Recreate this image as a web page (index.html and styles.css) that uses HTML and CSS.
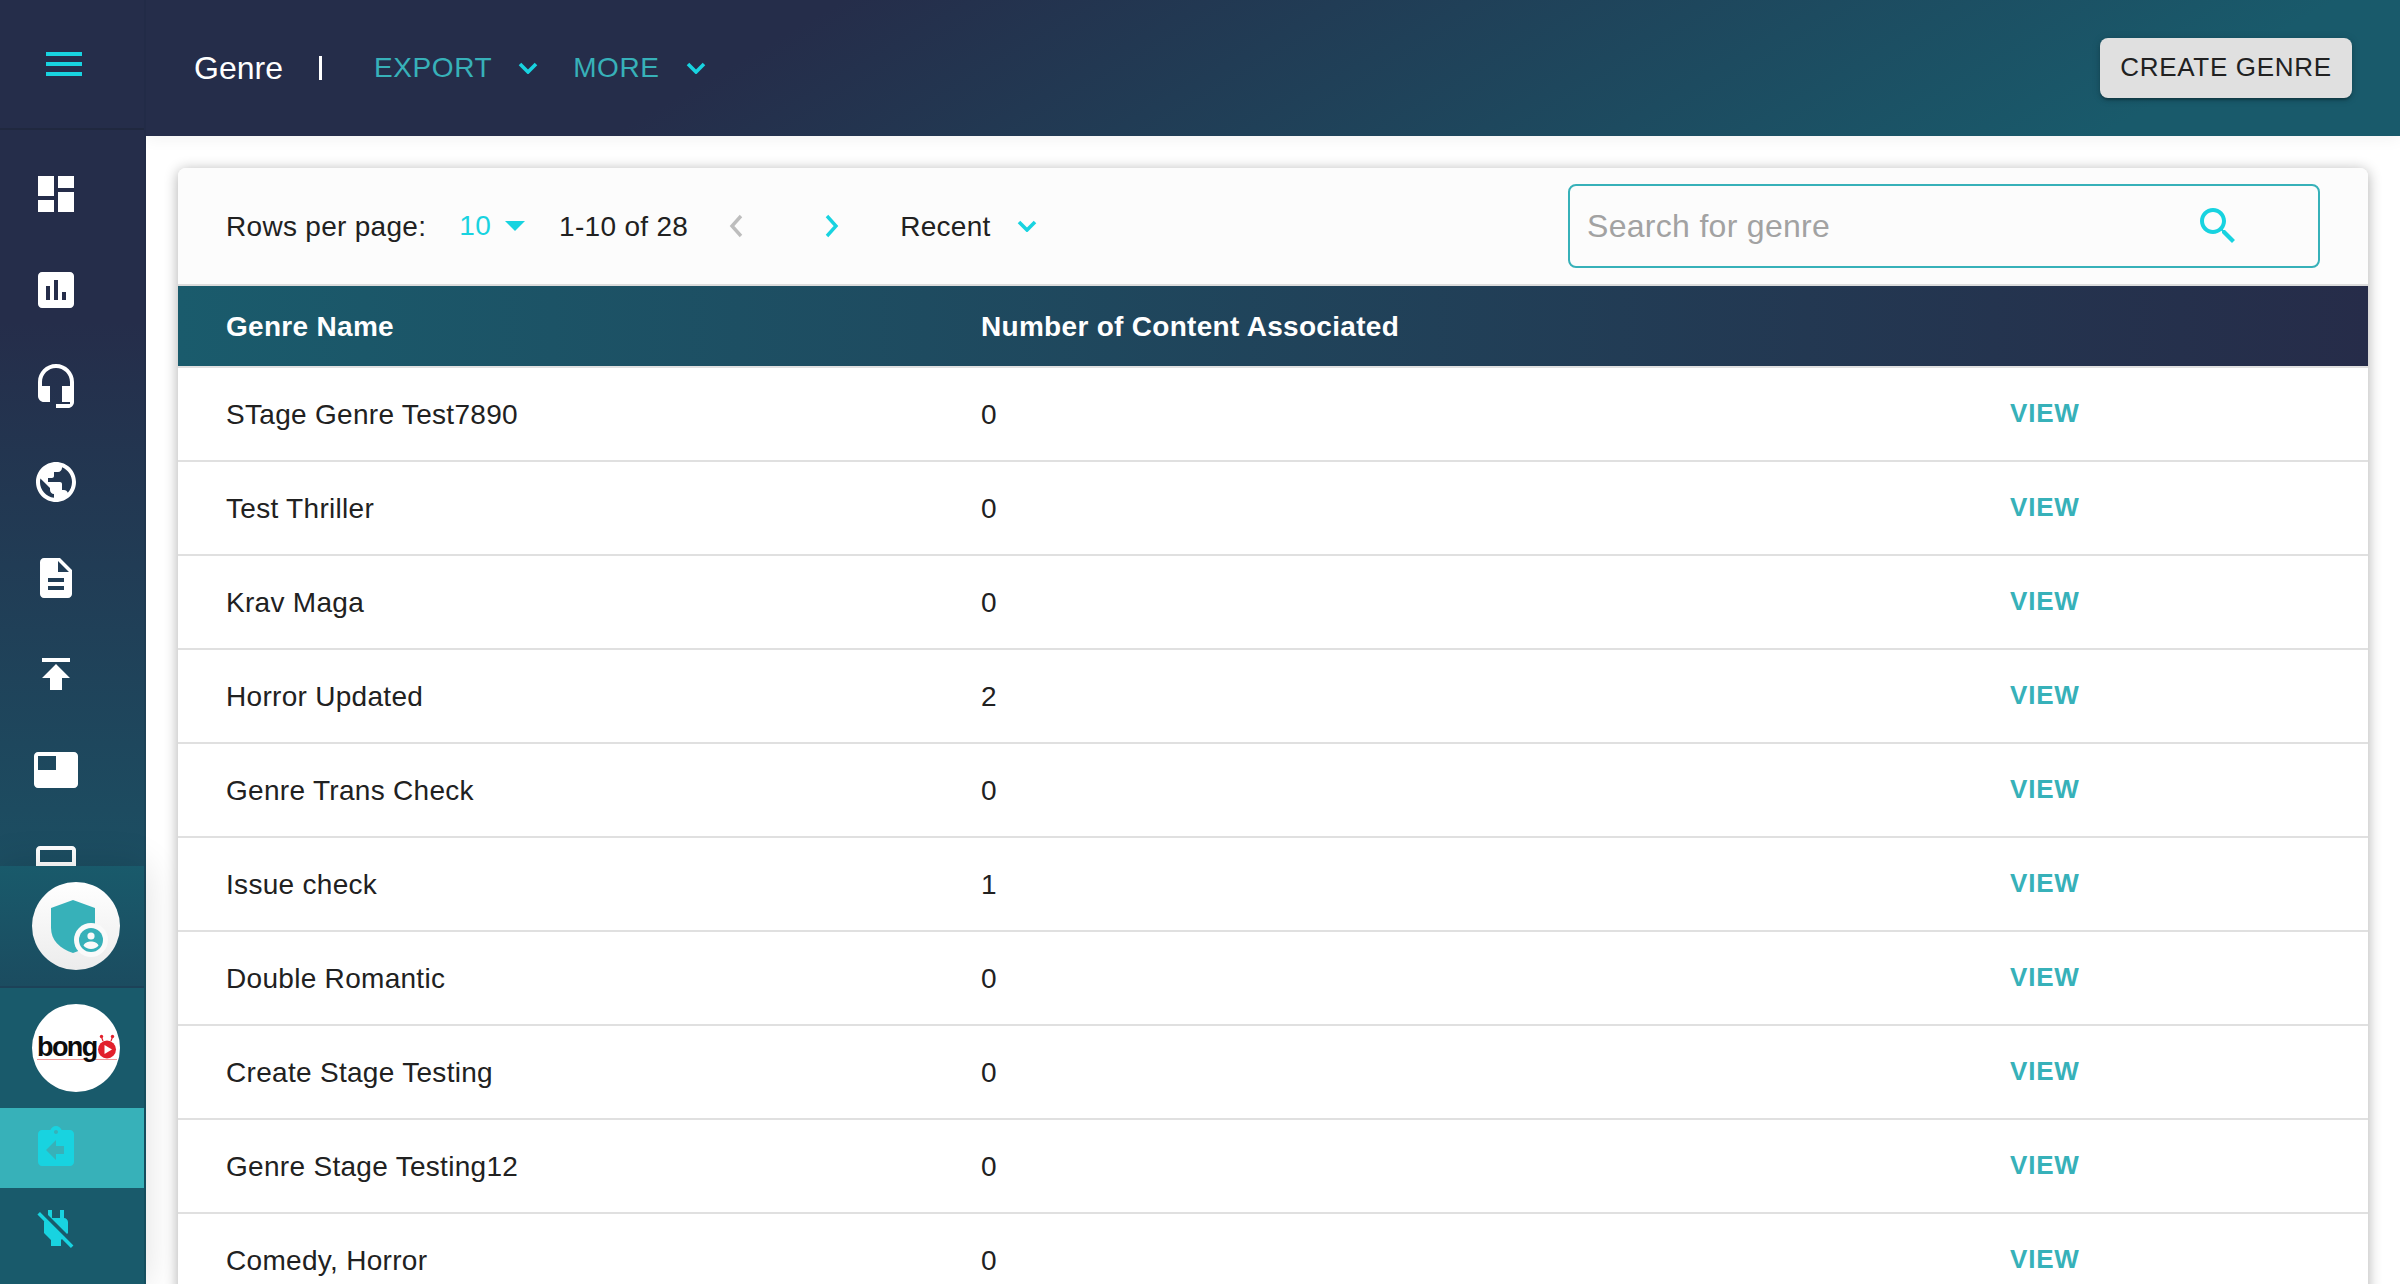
FILE: index.html
```html
<!DOCTYPE html>
<html lang="en">
<head>
<meta charset="utf-8">
<title>Genre</title>
<link rel="stylesheet" href="styles.css">
</head>
<body>
<div class="app">
  <aside class="sidebar">
    <div class="brand">
      <svg class="icon menu-icon" viewBox="0 0 24 24"><path d="M3 18h18v-2H3v2zm0-5h18v-2H3v2zm0-7v2h18V6H3z"/></svg>
    </div>
    <nav class="nav">
      <a class="nav-item"><svg class="icon" viewBox="0 0 24 24"><path d="M3 13h8V3H3v10zm0 8h8v-6H3v6zm10 0h8V11h-8v10zm0-18v6h8V3h-8z"/></svg></a>
      <a class="nav-item"><svg class="icon" viewBox="0 0 24 24"><path d="M19 3H5c-1.1 0-2 .9-2 2v14c0 1.1.9 2 2 2h14c1.1 0 2-.9 2-2V5c0-1.1-.9-2-2-2zM9 17H7v-7h2v7zm4 0h-2V7h2v10zm4 0h-2v-4h2v4z"/></svg></a>
      <a class="nav-item"><svg class="icon" viewBox="0 0 24 24"><path d="M12 1c-4.97 0-9 4.03-9 9v7c0 1.66 1.34 3 3 3h3v-8H5v-2c0-3.87 3.13-7 7-7s7 3.13 7 7v2h-4v8h4v1h-7v2h6c1.66 0 3-1.34 3-3V10c0-4.97-4.03-9-9-9z"/></svg></a>
      <a class="nav-item"><svg class="icon" viewBox="0 0 24 24"><path d="M12 2C6.48 2 2 6.48 2 12s4.48 10 10 10 10-4.48 10-10S17.52 2 12 2zm-1 17.93c-3.95-.49-7-3.85-7-7.93 0-.62.08-1.21.21-1.79L9 15v1c0 1.1.9 2 2 2v1.93zm6.9-2.54c-.26-.81-1-1.39-1.9-1.39h-1v-3c0-.55-.45-1-1-1H8v-2h2c.55 0 1-.45 1-1V7h2c1.1 0 2-.9 2-2v-.41c2.93 1.19 5 4.06 5 7.41 0 2.08-.8 3.97-2.1 5.39z"/></svg></a>
      <a class="nav-item"><svg class="icon" viewBox="0 0 24 24"><path d="M14 2H6c-1.1 0-1.99.9-1.99 2L4 20c0 1.1.89 2 1.99 2H18c1.1 0 2-.9 2-2V8l-6-6zm2 16H8v-2h8v2zm0-4H8v-2h8v2zm-3-5V3.5L18.5 9H13z"/></svg></a>
      <a class="nav-item"><svg class="icon" viewBox="0 0 24 24"><path d="M5 4v2h14V4H5zm0 10h4v6h6v-6h4l-7-7-7 7z"/></svg></a>
      <a class="nav-item"><svg class="icon" viewBox="0 0 24 24"><path d="M21 3H3c-1.1 0-2 .9-2 2v14c0 1.1.9 2 2 2h18c1.1 0 2-.9 2-2V5c0-1.1-.9-2-2-2zm-9 9H3V5h9v7z"/></svg></a>
      <a class="nav-item"><svg class="icon" viewBox="0 0 24 24"><path d="M4 2h16c1.1 0 2 .9 2 2v8c0 1.1-.9 2-2 2H4c-1.1 0-2-.9-2-2V4c0-1.1.9-2 2-2zm0 2v6h16V4H4z"/></svg></a>
    </nav>
    <div class="account">
      <div class="account-cell shaded">
        <div class="avatar avatar-admin">
          <svg viewBox="0 0 88 88" class="avatar-svg">
            <path class="teal" d="M41 18 L19 26 V46 C19 58 28 67 41 71 C54 67 63 58 63 46 V26 Z"/>
            <circle class="ring" cx="59" cy="58" r="17"/>
            <circle class="teal" cx="59" cy="58" r="12"/>
            <circle class="ring" cx="59" cy="54" r="3.6"/>
            <path class="ring" d="M51.5 63.5c1-2.800 4.500-4 7.500-4s6.500 1.200 7.500 4c-1.500 2.200-4.500 3.500-7.500 3.500s-6-1.300-7.500-3.500z"/>
          </svg>
        </div>
      </div>
      <div class="account-cell">
        <div class="avatar avatar-bongo">
          <span class="bongo-line"></span>
          <span class="bongo-word">bong</span>
          <svg class="bongo-o" viewBox="0 0 20 26">
            <path class="bongo-stroke" d="M6 7 4.500 3M14 7l1.500-4"/>
            <circle class="bongo-red" cx="4.500" cy="2.500" r="1.700"/>
            <circle class="bongo-red" cx="15.500" cy="2.500" r="1.700"/>
            <circle class="bongo-red" cx="10" cy="15.500" r="9"/>
            <path class="bongo-play" d="M7.500 11 15 15.500 7.500 20z"/>
          </svg>
        </div>
      </div>
      <a class="active-item">
        <svg class="icon" viewBox="0 0 24 24"><path d="M19 3h-4.180C14.400 1.840 13.300 1 12 1c-1.300 0-2.400.84-2.820 2H5c-1.100 0-2 .9-2 2v14c0 1.100.9 2 2 2h14c1.100 0 2-.9 2-2V5c0-1.100-.9-2-2-2zm-7 0c.55 0 1 .45 1 1s-.45 1-1 1-1-.45-1-1 .45-1 1-1zm4 12h-4v3l-5-5 5-5v3h4v4z"/></svg>
      </a>
      <a class="plug-item">
        <svg class="icon" viewBox="0 0 24 24"><path d="M18 14.490V9c0-1-1.010-2.010-2-2V3h-2v4h-4V3H8v2.480l9.510 9.500.49-.49zm-1.760 1.770L7.200 7.200l-.01.01L3.980 4 2.710 5.250l3.360 3.360C6.040 8.740 6 8.870 6 9v5.480L9.500 18v3h5v-3l.48-.48L19.450 22l1.260-1.280-4.470-4.460z"/></svg>
      </a>
    </div>
  </aside>

  <div class="main">
    <header class="topbar">
      <h1 class="title">Genre</h1>
      <span class="divider"></span>
      <button class="menu-link link-export">EXPORT<svg class="chev" viewBox="0 0 20 12"><path d="M2 2l8 8 8-8"/></svg></button>
      <button class="menu-link">MORE<svg class="chev" viewBox="0 0 20 12"><path d="M2 2l8 8 8-8"/></svg></button>
      <button class="create-btn">CREATE GENRE</button>
    </header>

    <section class="content">
      <div class="card">
        <div class="toolbar">
          <span class="rows-label">Rows per page:</span>
          <span class="rows-value">10</span>
          <svg class="caret" viewBox="0 0 20 10"><path d="M0 0h20L10 10z"/></svg>
          <span class="range">1-10 of 28</span>
          <svg class="page-arrow prev" viewBox="0 0 14 24"><path d="M12 2 3 12l9 10"/></svg>
          <svg class="page-arrow next" viewBox="0 0 14 24"><path d="M2 2l9 10-9 10"/></svg>
          <span class="sort">Recent</span>
          <svg class="chev sort-chev" viewBox="0 0 20 12"><path d="M2 2l8 8 8-8"/></svg>
          <div class="search">
            <span class="placeholder">Search for genre</span>
            <svg class="search-icon" viewBox="0 0 24 24"><path d="M15.500 14h-.79l-.28-.27C15.410 12.590 16 11.110 16 9.500 16 5.910 13.090 3 9.500 3S3 5.910 3 9.500 5.910 16 9.500 16c1.610 0 3.090-.59 4.230-1.570l.27.28v.79l5 4.990L20.490 19l-4.990-5zm-6 0C7.010 14 5 11.990 5 9.500S7.010 5 9.500 5 14 7.010 14 9.500 11.990 14 9.500 14z"/></svg>
          </div>
        </div>
        <div class="table-head row-grid">
          <span>Genre Name</span>
          <span>Number of Content Associated</span>
        </div>
        <div class="row row-grid"><span>STage Genre Test7890</span><span>0</span><a class="view">VIEW</a></div>
        <div class="row row-grid"><span>Test Thriller</span><span>0</span><a class="view">VIEW</a></div>
        <div class="row row-grid"><span>Krav Maga</span><span>0</span><a class="view">VIEW</a></div>
        <div class="row row-grid"><span>Horror Updated</span><span>2</span><a class="view">VIEW</a></div>
        <div class="row row-grid"><span>Genre Trans Check</span><span>0</span><a class="view">VIEW</a></div>
        <div class="row row-grid"><span>Issue check</span><span>1</span><a class="view">VIEW</a></div>
        <div class="row row-grid"><span>Double Romantic</span><span>0</span><a class="view">VIEW</a></div>
        <div class="row row-grid"><span>Create Stage Testing</span><span>0</span><a class="view">VIEW</a></div>
        <div class="row row-grid"><span>Genre Stage Testing12</span><span>0</span><a class="view">VIEW</a></div>
        <div class="row row-grid"><span>Comedy, Horror</span><span>0</span><a class="view">VIEW</a></div>
      </div>
    </section>
  </div>
</div>
</body>
</html>
```
FILE: styles.css
```css
* { box-sizing: border-box; }
html, body { margin: 0; height: 100%; overflow: hidden; background: #fff; }
body { font-family: "Liberation Sans", Arial, sans-serif; font-size: 28px; letter-spacing: .3px; color: #212121; }

.app { display: flex; height: 1284px; overflow: hidden; }

/* Sidebar */
.sidebar {
  width: 146px; flex: none; display: flex; flex-direction: column; position: relative; z-index: 3;
  background: linear-gradient(to bottom, #252d4a 25%, #195a6b 82%);
  border-right: 2px solid rgba(20, 30, 50, .12);
}
.icon { width: 48px; height: 48px; display: block; fill: #fff; }
.brand { height: 130px; flex: none; padding: 40px 0 0 40px; border-bottom: 2px solid #20283f; }
.menu-icon { fill: #18d3e0; }
.nav { height: 736px; flex: none; overflow: hidden; padding-top: 40px; }
.nav-item { display: block; height: 96px; padding-left: 32px; }

.account { flex: 1; display: flex; flex-direction: column; background: #195a6b; box-shadow: 0 0 36px rgba(0, 0, 0, .14); }
.account-cell { height: 122px; flex: none; padding: 16px 0 0 32px; border-bottom: 2px solid #1c4258; }
.account-cell:nth-child(2) { border-bottom: 0; height: 120px; }
.shaded { background: linear-gradient(to bottom, #195a6b, #1b4c60); }
.avatar { width: 88px; height: 88px; border-radius: 50%; background: #fff; position: relative; overflow: hidden; }
.avatar-admin { background: linear-gradient(to bottom, #fff, #ececec); }
.avatar-svg { width: 88px; height: 88px; display: block; }
.teal { fill: #37b1b9; }
.ring { fill: #fafafa; }

.bongo-word {
  position: absolute; left: 5px; top: 25px;
  font-weight: 700; font-size: 27px; line-height: 36px; letter-spacing: -1.6px; color: #0c0c0c;
}
.bongo-o { position: absolute; left: 65px; top: 30px; width: 20px; height: 26px; }
.bongo-red { fill: #e2202c; }
.bongo-stroke { stroke: #e2202c; stroke-width: 1.2; fill: none; }
.bongo-play { fill: #fff; }
.bongo-line { position: absolute; left: 5px; right: 3px; top: 55px; height: 1px; background: #ef9a9a; }

.active-item { display: block; height: 80px; flex: none; padding: 16px 0 0 32px; background: #37b1b9; }
.active-item .icon { fill: #18d3e0; }
.plug-item { display: block; padding: 16px 0 0 32px; }
.plug-item .icon { fill: #18d3e0; }

/* Main */
.main { flex: 1; min-width: 0; display: flex; flex-direction: column; }
.topbar {
  height: 136px; flex: none; display: flex; align-items: center; padding: 0 48px;
  background: linear-gradient(150deg, #252d4a 28%, #195a6b 88%);
  box-shadow: 0 2px 16px rgba(0, 0, 0, .06);
  position: relative; z-index: 2;
}
.title { margin: 0; font-size: 32px; font-weight: 400; letter-spacing: 0; color: #fff; line-height: 36px; }
.divider { width: 3px; height: 24px; background: #fff; margin: 0 52px 0 36px; }
.menu-link {
  display: flex; align-items: center; padding: 0; border: 0; background: none;
  font: 400 28px "Liberation Sans", Arial, sans-serif; letter-spacing: .6px; color: #37b1b9;
}
.chev { width: 20px; height: 12px; fill: none; stroke: #18d3e0; stroke-width: 3.600; display: block; margin-left: 26px; }
.link-export { margin-right: 35px; }
.create-btn {
  margin-left: auto; width: 252px; height: 60px; padding: 0 0 2px; border: 0; border-radius: 8px; background: #e0e0e0;
  font: 400 26px "Liberation Sans", Arial, sans-serif; letter-spacing: .7px; color: #212121;
  box-shadow: 0 3px 2px -1px rgba(0, 0, 0, .2), 0 2px 4px rgba(0, 0, 0, .14), 0 1px 10px rgba(0, 0, 0, .12);
}

.content { flex: 1; min-height: 0; padding: 32px 32px 0; overflow: hidden; }
.card { border-radius: 8px 8px 0 0; background: #fff; box-shadow: 0 2px 14px rgba(0, 0, 0, .32); }

.toolbar {
  height: 118px; display: flex; align-items: center; padding: 0 48px;
  background: #fcfcfc; border-radius: 8px 8px 0 0; border-bottom: 2px solid #dcdcdc;
}
.rows-label, .range, .sort { padding-top: 2px; }
.rows-value { margin-left: 33px; color: #18d3e0; }
.caret { width: 20px; height: 10px; fill: #18d3e0; margin-left: 14px; }
.range { margin-left: 34px; }
.page-arrow { width: 14px; height: 24px; fill: none; stroke-width: 3.400; }
.prev { margin-left: 41px; stroke: #bdbdbd; }
.next { margin-left: 82px; stroke: #18d3e0; }
.sort { margin-left: 61px; }
.sort-chev { margin-left: 26px; }
.search {
  margin-left: auto; width: 752px; height: 84px; display: flex; align-items: center; padding: 0 0 0 17px;
  border: 2px solid #37b1b9; border-radius: 8px; position: relative;
}
.placeholder { font-size: 32px; color: #a2a2a2; }
.search-icon { position: absolute; left: 624px; top: 16px; width: 48px; height: 48px; fill: #18d3e0; }

.row-grid { display: grid; grid-template-columns: 755px 1029px 1fr; align-items: center; padding-left: 48px; }
.table-head {
  height: 82px; padding-top: 2px; border-bottom: 2px solid #e0e0e0; font-weight: 700; color: #fff;
  background: linear-gradient(to right, #1a5b6c, #262c49) padding-box;
}
.row { height: 94px; padding-top: 2px; border-bottom: 2px solid #e0e0e0; }
.view { margin-bottom: 4px; font-weight: 700; font-size: 26px; letter-spacing: .8px; color: #37b1b9; }
```
